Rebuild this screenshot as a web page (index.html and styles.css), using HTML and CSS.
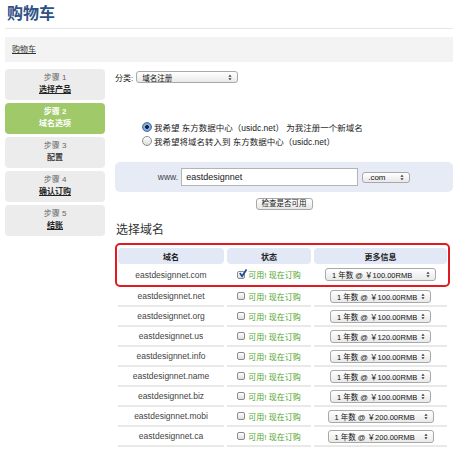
FILE: index.html
```html
<!DOCTYPE html>
<html lang="zh-CN">
<head>
    <meta charset="UTF-8">
    <meta name="viewport" content="width=device-width, initial-scale=1.0">
    <title>购物车</title>
    <link rel="stylesheet" href="styles.css">
</head>
<body>
    <div class="page">
        <h1 class="page-title">购物车</h1>

        <div class="breadcrumb"><a href="#">购物车</a></div>

        <div class="layout">
            <div class="steps">
                <div class="step">
                    <span class="step-num">步骤 1</span>
                    <a href="#" class="step-name">选择产品</a>
                </div>
                <div class="step active">
                    <span class="step-num">步骤 2</span>
                    <span class="step-name">域名选项</span>
                </div>
                <div class="step">
                    <span class="step-num">步骤 3</span>
                    <span class="step-name">配置</span>
                </div>
                <div class="step">
                    <span class="step-num">步骤 4</span>
                    <a href="#" class="step-name">确认订购</a>
                </div>
                <div class="step">
                    <span class="step-num">步骤 5</span>
                    <a href="#" class="step-name">结账</a>
                </div>
            </div>

            <div class="main">
                <div class="filter">
                    <span>分类:</span>
                    <div class="select select-category">
                        <span>域名注册</span>
                        <svg class="arrows" viewBox="0 0 5 8"><path d="M0.5 3 L2.5 0.5 L4.5 3 Z M0.5 5 L2.5 7.5 L4.5 5 Z"/></svg>
                    </div>
                </div>

                <div class="choices">
                    <label class="choice"><span class="radio checked"></span>我希望 东方数据中心（usidc.net） 为我注册一个新域名</label>
                    <label class="choice"><span class="radio"></span>我希望将域名转入到 东方数据中心（usidc.net）</label>
                </div>

                <div class="domain-box">
                    <span class="www">www.</span>
                    <div class="text-input">eastdesignnet</div>
                    <div class="select select-tld">
                        <span>.com</span>
                        <svg class="arrows" viewBox="0 0 5 8"><path d="M0.5 3 L2.5 0.5 L4.5 3 Z M0.5 5 L2.5 7.5 L4.5 5 Z"/></svg>
                    </div>
                </div>

                <div class="check">
                    <button class="button">检查是否可用</button>
                </div>

                <h2 class="section-title">选择域名</h2>

                <div class="featured">
                    <div class="row head">
                        <div class="cell">域名</div>
                        <div class="cell">状态</div>
                        <div class="cell">更多信息</div>
                    </div>
                    <div class="row first">
                        <div class="cell name">eastdesignnet.com</div>
                        <div class="cell status"><span class="checkbox checked"><svg viewBox="0 0 10 10"><path d="M2 4.5 L4.5 8 L9.5 0.5"/></svg></span>可用! 现在订购</div>
                        <div class="cell"><div class="select price wide"><span>1 年数 @ ￥100.00RMB</span><svg class="arrows" viewBox="0 0 5 8"><path d="M0.5 3 L2.5 0.5 L4.5 3 Z M0.5 5 L2.5 7.5 L4.5 5 Z"/></svg></div></div>
                    </div>
                </div>

                <div class="domain-list" id="domainList"></div>
            </div>
        </div>
    </div>

    <script>
        const domains = [
            { name: 'eastdesignnet.net', price: '100.00', size: '' },
            { name: 'eastdesignnet.org', price: '100.00', size: '' },
            { name: 'eastdesignnet.us', price: '120.00', size: '' },
            { name: 'eastdesignnet.info', price: '100.00', size: '' },
            { name: 'eastdesignnet.name', price: '100.00', size: '' },
            { name: 'eastdesignnet.biz', price: '100.00', size: '' },
            { name: 'eastdesignnet.mobi', price: '200.00', size: 'mid' },
            { name: 'eastdesignnet.ca', price: '200.00', size: 'mid' }
        ];

        const list = document.getElementById('domainList');
        domains.forEach(domain => {
            const row = document.createElement('div');
            row.className = 'row';
            row.innerHTML = `<div class="cell name">${domain.name}</div>
                <div class="cell status"><span class="checkbox"></span>可用! 现在订购</div>
                <div class="cell"><div class="select price ${domain.size}"><span>1 年数 @ ￥${domain.price}RMB</span><svg class="arrows" viewBox="0 0 5 8"><path d="M0.5 3 L2.5 0.5 L4.5 3 Z M0.5 5 L2.5 7.5 L4.5 5 Z"/></svg></div></div>`;
            list.appendChild(row);
        });
    </script>
</body>
</html>
```

FILE: styles.css
```css
body {
    margin: 0;
    background: #fff;
    font-family: "Liberation Sans", "Noto Sans CJK SC", sans-serif;
    font-size: 8px;
    color: #333;
}

a {
    color: #333;
}

.page {
    padding: 0 5px;
}

.page-title {
    margin: 0;
    padding: 4px 0 4px 2px;
    height: 20px;
    line-height: 20px;
    font-size: 16px;
    color: #2f5285;
    border-bottom: 1px solid #e6e6e6;
}

.breadcrumb {
    margin-top: 8px;
    height: 25px;
    line-height: 25px;
    padding-left: 7px;
    background: #f3f3f3;
}

.layout {
    display: flex;
    margin-top: 7px;
}

.steps {
    width: 100px;
    display: flex;
    flex-direction: column;
    gap: 3px;
}

.step {
    box-sizing: border-box;
    height: 31px;
    padding-top: 3px;
    background: #ececec;
    border-radius: 4px;
    text-align: center;
    line-height: 12px;
}

.step-num {
    display: block;
    color: #666;
}

.step-name {
    display: block;
    font-weight: bold;
    color: #444;
}

a.step-name {
    color: #222;
}

.step.active {
    background: #a0c96a;
}

.step.active .step-num,
.step.active .step-name {
    color: #fff;
    font-weight: bold;
}

.main {
    flex: 1;
    margin-left: 10px;
}

.filter {
    display: flex;
    align-items: center;
    height: 12px;
    margin-top: 2px;
    color: #222;
}

.select {
    box-sizing: border-box;
    display: flex;
    align-items: center;
    justify-content: space-between;
    height: 12px;
    padding: 0 5px 0 5px;
    border: 1px solid #a8a8a8;
    border-radius: 3px;
    background: linear-gradient(#ffffff, #e9e9e9);
    color: #111;
    font-size: 7.5px;
}

.arrows {
    width: 4px;
    height: 7px;
    fill: #333;
}

.select-category {
    width: 102px;
    margin-left: 3px;
}

.choices {
    margin-top: 37px;
    padding-left: 27px;
}

.choice {
    display: flex;
    align-items: center;
    height: 14px;
    font-size: 8.5px;
    color: #222;
}

.radio {
    box-sizing: border-box;
    width: 10px;
    height: 10px;
    margin-right: 2px;
    border: 1px solid #8d8d8d;
    border-radius: 50%;
    background: linear-gradient(#ffffff, #dcdcdc);
}

.radio.checked {
    border-color: #4a6f9e;
    background: radial-gradient(circle, #1b2333 0, #1b2333 1.6px, #8fb8ea 2.2px, #3f80d6 100%);
}

.domain-box {
    display: flex;
    align-items: center;
    justify-content: center;
    gap: 3px;
    height: 30px;
    margin-top: 14px;
    background: #e7ebf6;
    border-radius: 5px;
    font-size: 8.5px;
    color: #444;
}

.text-input {
    box-sizing: border-box;
    width: 177px;
    height: 18px;
    line-height: 16px;
    padding-left: 4px;
    background: #fff;
    border: 1px solid #b4b4b4;
    font-size: 9px;
    color: #222;
}

.select-tld {
    width: 48px;
    height: 11px;
    margin-left: 1px;
    font-size: 8px;
}

.check {
    margin-top: 6px;
    text-align: center;
}

.button {
    height: 12px;
    padding: 0 5px;
    line-height: 10px;
    border: 1px solid #a8a8a8;
    border-radius: 3px;
    background: linear-gradient(#ffffff, #e6e6e6);
    font-family: inherit;
    font-size: 7.5px;
    color: #222;
}

.section-title {
    margin: 12px 0 5px 1px;
    height: 16px;
    line-height: 16px;
    font-size: 12px;
    font-weight: normal;
    color: #333;
}

.featured {
    width: 335px;
    box-sizing: border-box;
    padding: 3px 1px 0 1px;
    border: 2px solid #e01b22;
    border-radius: 5px;
}

.row {
    display: grid;
    grid-template-columns: 106px 84px 133px;
    column-gap: 3px;
}

.cell {
    display: flex;
    align-items: center;
    justify-content: center;
}

.head .cell {
    height: 16px;
    background: #e2e8f5;
    border-radius: 4px;
    font-weight: bold;
    color: #222;
}

.first .cell {
    height: 21px;
}

.domain-list {
    margin-left: 3px;
}

.domain-list .cell {
    box-sizing: border-box;
    height: 20px;
    border-bottom: 2px solid #e9e9e9;
}

.name {
    font-size: 8.5px;
    color: #444;
}

.status {
    color: #4ea62b;
}

.checkbox {
    position: relative;
    box-sizing: border-box;
    width: 8px;
    height: 8px;
    margin-right: 3px;
    border: 1px solid #8a8a8a;
    border-radius: 2px;
    background: linear-gradient(#ffffff, #dedede);
}

.checkbox svg {
    position: absolute;
    left: 0;
    top: -3px;
    width: 9px;
    height: 9px;
    fill: none;
    stroke: #1e4c9c;
    stroke-width: 2;
}

.price {
    width: 101px;
    height: 13px;
    padding: 0 5px 0 6px;
}

.price.wide {
    width: 111px;
}

.price.mid {
    width: 106px;
}
```
